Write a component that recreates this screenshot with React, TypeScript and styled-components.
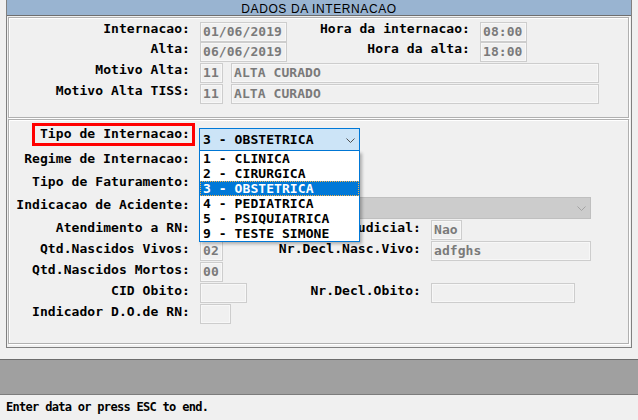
import React from "react";
import styled, { createGlobalStyle, css } from "styled-components";

const GlobalStyle = createGlobalStyle`
  html, body { margin: 0; padding: 0; background: #f0f0f0; }
  body {
    width: 638px; height: 420px; overflow: hidden;
    font-family: "DejaVu Sans Mono", "Liberation Mono", monospace;
  }
`;

const Screen = styled.div`
  width: 638px;
  height: 420px;
  display: flex;
  flex-direction: column;
  background: #f0f0f0;
`;

const Frame = styled.div`
  box-sizing: border-box;
  margin-left: 6px;
  width: 626px;
  height: 348px;
  border: 1px solid #808080;
  border-top: none;
  padding-bottom: 3px;
  display: flex;
  flex-direction: column;
  gap: 1px;
`;

const TitleBar = styled.div`
  box-sizing: border-box;
  height: 16px;
  padding-top: 3px;
  background: #99b4d1;
  border-bottom: 1px solid #6f6f6f;
  overflow: hidden;
  text-align: center;
  font-family: "Liberation Sans", Arial, sans-serif;
  font-size: 12px;
  letter-spacing: 0.6px;
  line-height: 13px;
  color: #000;
`;

const Panel = styled.div<{ $h: number; $pt: number }>`
  box-sizing: border-box;
  height: ${(p) => p.$h}px;
  margin: 0 2px 0 1px;
  padding-top: ${(p) => p.$pt}px;
  border: 1px solid #b0b0b0;
  box-shadow: inset 1px 1px 0 #ffffff, 1px 1px 0 #ffffff;
  display: flex;
  flex-direction: column;
`;

const FormRow = styled.div<{ $h: number; $cols: string }>`
  height: ${(p) => p.$h}px;
  display: grid;
  grid-template-columns: ${(p) => p.$cols};
  column-gap: 10px;
  align-items: start;
`;

const Label = styled.span<{ $mt?: number; $col?: number; $hl?: boolean }>`
  grid-column: ${(p) => p.$col ?? 1};
  justify-self: end;
  margin-top: ${(p) => p.$mt ?? 0}px;
  white-space: nowrap;
  font-size: 13px;
  font-weight: bold;
  letter-spacing: 0.07px;
  line-height: 14px;
  color: #000;
  ${(p) =>
    p.$hl &&
    css`
      padding: 1px 2px 2px 5px;
      margin-right: -2px;
      margin-top: ${(p.$mt ?? 0) - 3}px;
      outline: 3px solid #ff0000;
    `}
`;

const Field = styled.div<{ $w: number; $col?: number }>`
  grid-column: ${(p) => p.$col ?? 2};
  box-sizing: border-box;
  width: ${(p) => p.$w}px;
  height: 20px;
  padding-left: 2px;
  border: 1px solid #cdcdcd;
  box-shadow: inset 0 0 0 1px #f7f7f7;
  background: #f0f0f0;
  font-size: 13px;
  font-weight: bold;
  letter-spacing: 0.07px;
  line-height: 18px;
  color: #7a7a7a;
  white-space: nowrap;
  overflow: hidden;
`;

const FieldGroup = styled.div`
  grid-column: 2 / -1;
  display: flex;
  gap: 8px;
`;

const ComboWrap = styled.div`
  grid-column: 2 / -1;
  margin-left: -1px;
  position: relative;
  z-index: 5;
`;

const Combo = styled.div<{ $w: number; $h: number; $state: "open" | "disabled" | "normal" }>`
  grid-column: 2 / -1;
  box-sizing: border-box;
  width: ${(p) => p.$w}px;
  height: ${(p) => p.$h}px;
  padding: 0 4px 0 3px;
  display: flex;
  align-items: center;
  justify-content: space-between;
  font-size: 13px;
  font-weight: bold;
  letter-spacing: 0.07px;
  line-height: ${(p) => p.$h - 2}px;
  color: #000;
  ${(p) =>
    p.$state === "open"
      ? css`
          background: #cce4f7;
          border: 1px solid #0078d7;
        `
      : p.$state === "disabled"
      ? css`
          margin-left: -1px;
          background: #cccccc;
          border: 1px solid #bfbfbf;
        `
      : css`
          margin-left: -1px;
          background: #ffffff;
          border: 1px solid #adadad;
        `}
`;

const ChevronSvg = styled.svg<{ $c: string }>`
  flex: none;
  width: 9px;
  height: 5px;
  margin-top: 1px;
  stroke: ${(p) => p.$c};
`;

const Chevron = ({ color }: { color: string }) => (
  <ChevronSvg $c={color} viewBox="0 0 9 5" fill="none" strokeWidth={1}>
    <path d="M0.5 0.5 L4.5 4.5 L8.5 0.5" />
  </ChevronSvg>
);

const DropList = styled.ul`
  position: absolute;
  left: 0;
  top: 23px;
  box-sizing: border-box;
  width: 161px;
  margin: 0;
  padding: 0;
  list-style: none;
  background: #ffffff;
  border: 1px solid #0078d7;
  border-top: none;
  box-shadow: 2px 2px 3px rgba(0, 0, 0, 0.28);
`;

const DropItem = styled.li<{ $sel?: boolean }>`
  box-sizing: border-box;
  height: 15px;
  padding-left: 3px;
  font-size: 13px;
  font-weight: bold;
  letter-spacing: 0.07px;
  line-height: 15px;
  white-space: nowrap;
  color: ${(p) => (p.$sel ? "#ffffff" : "#000000")};
  background: ${(p) => (p.$sel ? "#0078d7" : "transparent")};
  outline: ${(p) => (p.$sel ? "1px dotted #f7b24a" : "none")};
  outline-offset: -1px;
`;

const GrayBar = styled.div`
  box-sizing: border-box;
  margin-top: 11px;
  height: 36px;
  background: #a0a0a0;
  border-top: 1px solid #6c6c6c;
  border-bottom: 1px solid #7c7c7c;
`;

const StatusLine = styled.div`
  padding: 5px 0 0 6px;
  font-size: 12px;
  font-weight: bold;
  letter-spacing: -0.7px;
  line-height: 14px;
  color: #000;
  white-space: nowrap;
`;

const P1 = "181px 87px 173px 1fr";
const P2 = "181px 60px 151px 1fr";

const options = [
  "1 - CLINICA",
  "2 - CIRURGICA",
  "3 - OBSTETRICA",
  "4 - PEDIATRICA",
  "5 - PSIQUIATRICA",
  "9 - TESTE SIMONE",
];

export default function App() {
  return (
    <Screen>
      <GlobalStyle />
      <Frame>
        <TitleBar>DADOS DA INTERNACAO</TitleBar>
        <Panel $h={101} $pt={4}>
          <FormRow $h={20} $cols={P1}>
            <Label>Internacao:</Label>
            <Field $w={87}>01/06/2019</Field>
            <Label $col={3}>Hora da internacao:</Label>
            <Field $w={47} $col={4}>08:00</Field>
          </FormRow>
          <FormRow $h={21} $cols={P1}>
            <Label>Alta:</Label>
            <Field $w={87}>06/06/2019</Field>
            <Label $col={3}>Hora da alta:</Label>
            <Field $w={47} $col={4}>18:00</Field>
          </FormRow>
          <FormRow $h={21} $cols={P1}>
            <Label>Motivo Alta:</Label>
            <FieldGroup>
              <Field $w={23}>11</Field>
              <Field $w={368}>ALTA CURADO</Field>
            </FieldGroup>
          </FormRow>
          <FormRow $h={20} $cols={P1}>
            <Label>Motivo Alta TISS:</Label>
            <FieldGroup>
              <Field $w={23}>11</Field>
              <Field $w={368}>ALTA CURADO</Field>
            </FieldGroup>
          </FormRow>
        </Panel>
        <Panel $h={225} $pt={8}>
          <FormRow $h={23} $cols={P2}>
            <Label $mt={1} $hl>Tipo de Internacao:</Label>
            <ComboWrap>
              <Combo $w={161} $h={23} $state="open">
                <span>3 - OBSTETRICA</span>
                <Chevron color="#505050" />
              </Combo>
              <DropList>
                {options.map((o) => (
                  <DropItem key={o} $sel={o.startsWith("3")}>
                    {o}
                  </DropItem>
                ))}
              </DropList>
            </ComboWrap>
          </FormRow>
          <FormRow $h={23} $cols={P2}>
            <Label $mt={1}>Regime de Internacao:</Label>
            <Combo $w={150} $h={22} $state="normal" />
          </FormRow>
          <FormRow $h={23} $cols={P2}>
            <Label $mt={1}>Tipo de Faturamento:</Label>
            <Combo $w={150} $h={22} $state="normal" />
          </FormRow>
          <FormRow $h={23} $cols={P2}>
            <Label $mt={1}>Indicacao de Acidente:</Label>
            <Combo $w={392} $h={22} $state="disabled">
              <span />
              <Chevron color="#a3a3a3" />
            </Combo>
          </FormRow>
          <FormRow $h={21} $cols={P2}>
            <Label $mt={1}>Atendimento a RN:</Label>
            <Field $w={40} />
            <Label $mt={1} $col={3}>Judicial:</Label>
            <Field $w={31} $col={4}>Nao</Field>
          </FormRow>
          <FormRow $h={21} $cols={P2}>
            <Label $mt={1}>Qtd.Nascidos Vivos:</Label>
            <Field $w={23}>02</Field>
            <Label $mt={1} $col={3}>Nr.Decl.Nasc.Vivo:</Label>
            <Field $w={160} $col={4}>adfghs</Field>
          </FormRow>
          <FormRow $h={21} $cols={P2}>
            <Label $mt={1}>Qtd.Nascidos Mortos:</Label>
            <Field $w={23}>00</Field>
          </FormRow>
          <FormRow $h={21} $cols={P2}>
            <Label $mt={1}>CID Obito:</Label>
            <Field $w={47} />
            <Label $mt={1} $col={3}>Nr.Decl.Obito:</Label>
            <Field $w={144} $col={4} />
          </FormRow>
          <FormRow $h={21} $cols={P2}>
            <Label $mt={1}>Indicador D.O.de RN:</Label>
            <Field $w={31} />
          </FormRow>
        </Panel>
      </Frame>
      <GrayBar />
      <StatusLine>Enter data or press ESC to end.</StatusLine>
    </Screen>
  );
}
